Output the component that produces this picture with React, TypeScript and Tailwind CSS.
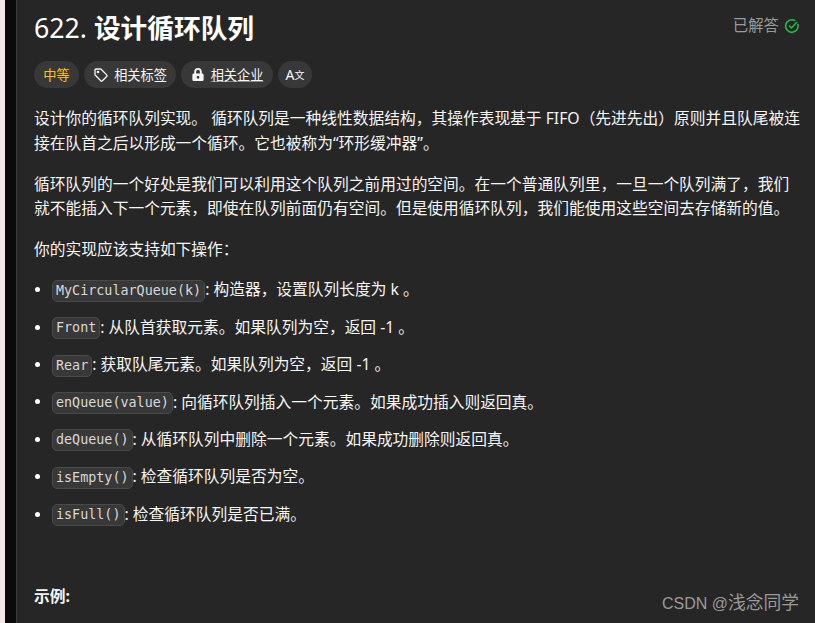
const SANS = "font-['Noto_Sans','Noto_Sans_CJK_SC',sans-serif]";

const items: [string, string][] = [
  ["MyCircularQueue(k)", ": 构造器，设置队列长度为 k 。"],
  ["Front", ": 从队首获取元素。如果队列为空，返回 -1 。"],
  ["Rear", ": 获取队尾元素。如果队列为空，返回 -1 。"],
  ["enQueue(value)", ": 向循环队列插入一个元素。如果成功插入则返回真。"],
  ["deQueue()", ": 从循环队列中删除一个元素。如果成功删除则返回真。"],
  ["isEmpty()", ": 检查循环队列是否为空。"],
  ["isFull()", ": 检查循环队列是否已满。"],
];

function Tag() {
  return (
    <svg width="16" height="16" viewBox="0 0 24 24" fill="none" stroke="currentColor" strokeWidth="2" strokeLinejoin="round">
      <path d="M3 4.500A1.500 1.500 0 0 1 4.500 3h6.400c.5 0 1 .2 1.300.5l8.300 8.300a1.800 1.800 0 0 1 0 2.500l-6.400 6.400a1.800 1.800 0 0 1-2.500 0L3.500 12.400A2 2 0 0 1 3 11.100V4.500z" />
      <circle cx="7.500" cy="7.500" r="1" fill="currentColor" />
    </svg>
  );
}

function Lock() {
  return (
    <svg width="14" height="15" viewBox="0 0 14 16" fill="currentColor">
      <path d="M7 1a4 4 0 0 0-4 4v2H2.500A1.500 1.500 0 0 0 1 8.500v5A1.500 1.500 0 0 0 2.500 15h9a1.500 1.500 0 0 0 1.500-1.500v-5A1.500 1.500 0 0 0 11.500 7H11V5a4 4 0 0 0-4-4zm0 2a2 2 0 0 1 2 2v2H5V5a2 2 0 0 1 2-2zm0 6.500a1.500 1.500 0 1 1 0 3 1.500 1.500 0 0 1 0-3z" fillRule="evenodd" />
    </svg>
  );
}

export default function App() {
  return (
    <div className={`${SANS} flex h-[623px] w-[815px] overflow-hidden bg-[#262626] text-[15.74px] text-[#f5f5f5]`}>
      <div className="w-[5px] shrink-0 bg-[#f3e6e6]" />
      <div className="w-[11px] shrink-0 bg-[#0a0a0a]" />
      <main className="relative min-w-0 flex-1 border-l border-[#3c3c3c] pl-[17px] pr-[12px] pt-[9px]">
        <header className="flex h-[38px] items-center justify-between">
          <h1 className="text-[26.700px] leading-[38px] text-white">622. <span className="font-bold">设计循环队列</span></h1>
          <div className="flex items-center gap-[5px] pb-[4px] pr-[3px] text-[15.4px] text-[#9a9a9a]">
            已解答
            <svg width="16" height="16" viewBox="0 0 16 16" fill="none" stroke="#22b84c" strokeWidth="1.600" strokeLinecap="round" strokeLinejoin="round">
              <path d="M14 6.500A6.300 6.300 0 1 1 10.500 2.300" />
              <path d="M5.500 8l2 2 5-5.500" />
            </svg>
          </div>
        </header>
        <div className="mt-[14px] flex gap-[5px] text-[13.2px] leading-[18px]">
          <span className="flex h-[27px] w-[45px] items-center justify-center rounded-full bg-[#383838] text-[#ffc01e]">中等</span>
          <span className="flex h-[27px] w-[92px] items-center justify-center gap-[5px] rounded-full bg-[#383838]"><Tag />相关标签</span>
          <span className="flex h-[27px] w-[92px] items-center justify-center gap-[6px] rounded-full bg-[#383838]"><Lock /><span className="underline decoration-[#888888]">相关企业</span></span>
          <span className="flex h-[27px] w-[34px] items-center justify-center rounded-full bg-[#383838] text-[14px]">A<span className="text-[10px]">文</span></span>
        </div>
        <div className="mt-[18px] leading-[24.6px]">
          <p>设计你的循环队列实现。 循环队列是一种线性数据结构，其操作表现基于 FIFO（先进先出）原则并且队尾被连接在队首之后以形成一个循环。它也被称为“环形缓冲器”。</p>
          <p className="mt-[16.500px]">循环队列的一个好处是我们可以利用这个队列之前用过的空间。在一个普通队列里，一旦一个队列满了，我们就不能插入下一个元素，即使在队列前面仍有空间。但是使用循环队列，我们能使用这些空间去存储新的值。</p>
          <p className="mt-[16.500px]">你的实现应该支持如下操作：</p>
          <ul className="mt-[15.500px] flex flex-col gap-[12.800px]">
            {items.map(([code, text]) => (
              <li key={code} className="flex h-[24.600px] items-center">
                <span className="ml-[1px] mr-[12px] h-[5px] w-[5px] shrink-0 rounded-full bg-white" />
                <code className="mt-[2px] rounded-[5px] border border-[#4a4a4a] bg-[#383838] px-[3px] font-['DejaVu_Sans_Mono','Liberation_Mono',monospace] text-[13.400px] leading-[20px] text-[#d8d8d8]">{code}</code>
                <span>{text}</span>
              </li>
            ))}
          </ul>
          <p className="mt-[58px] font-bold">示例:</p>
        </div>
        <div className="absolute bottom-[9px] right-[16px] flex items-baseline leading-[20px] text-[#9a9a9a]">
          <span className="font-['Liberation_Sans',sans-serif] text-[16px] whitespace-pre">CSDN @</span>
          <span className="text-[17.750px]">浅念同学</span>
        </div>
      </main>
    </div>
  );
}
